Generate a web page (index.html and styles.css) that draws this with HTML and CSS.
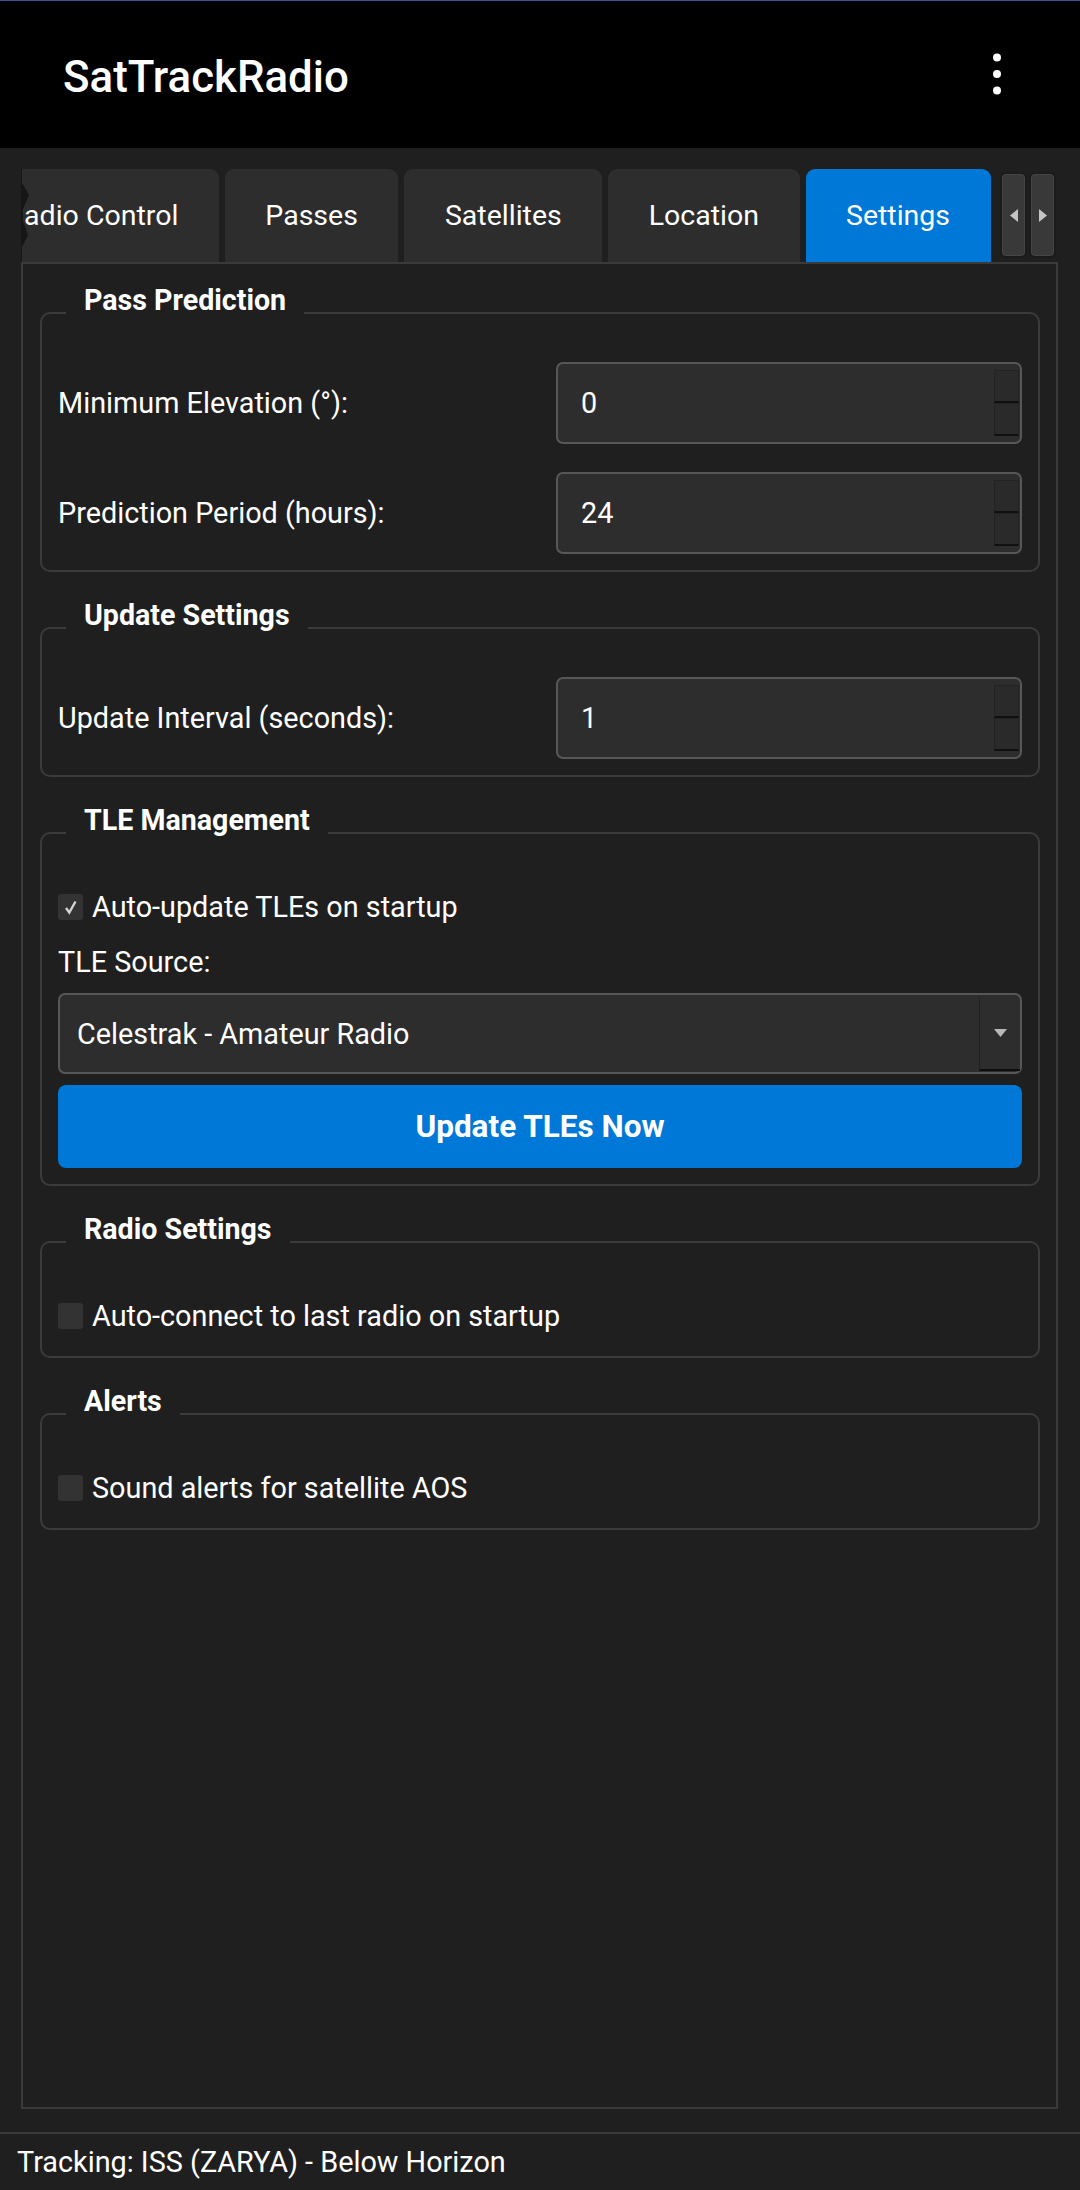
FILE: index.html
```html
<!DOCTYPE html>
<html lang="en">
<head>
<meta charset="utf-8">
<title>SatTrackRadio</title>
<link rel="stylesheet" href="styles.css">
</head>
<body>
<div class="app">
  <header class="appbar">
    <div class="title">SatTrackRadio</div>
    <svg class="kebab" width="10" height="42" viewBox="0 0 10 42" aria-hidden="true">
      <circle cx="5" cy="4.5" r="4"/>
      <circle cx="5" cy="21" r="4"/>
      <circle cx="5" cy="37.5" r="4"/>
    </svg>
  </header>

  <main class="main">
    <div class="tabbar">
      <div class="tabstrip">
        <div class="tabs">
          <div class="tab first">Radio Control</div>
          <div class="tab">Passes</div>
          <div class="tab">Satellites</div>
          <div class="tab">Location</div>
          <div class="tab active">Settings</div>
        </div>
        <svg class="tear" width="10" height="93" viewBox="0 0 10 93" aria-hidden="true">
          <polygon points="0,0 1,0 1,14 8,26 2,40 2,52 7,66 1,78 1,93 0,93"/>
        </svg>
      </div>
      <div class="scrollbtns">
        <div class="sbtn"><svg width="8" height="13" viewBox="0 0 8 13"><polygon points="8,0 8,13 0,6.5"/></svg></div>
        <div class="sbtn"><svg width="8" height="13" viewBox="0 0 8 13"><polygon points="0,0 0,13 8,6.5"/></svg></div>
      </div>
    </div>

    <div class="pane">
      <section class="group">
        <div class="gtitle">Pass Prediction</div>
        <div class="form">
          <div class="lbl">Minimum Elevation (°):</div>
          <div class="spin"><span class="val">0</span><span class="spinbtns"><i></i><i></i></span></div>
          <div class="lbl">Prediction Period (hours):</div>
          <div class="spin"><span class="val">24</span><span class="spinbtns"><i></i><i></i></span></div>
        </div>
      </section>

      <section class="group">
        <div class="gtitle">Update Settings</div>
        <div class="form">
          <div class="lbl">Update Interval (seconds):</div>
          <div class="spin"><span class="val">1</span><span class="spinbtns"><i></i><i></i></span></div>
        </div>
      </section>

      <section class="group">
        <div class="gtitle">TLE Management</div>
        <div class="stack">
          <div class="check">
            <span class="box checked"><svg width="14" height="16" viewBox="0 0 14 16"><polyline points="2,9 5.3,13.5 11.5,2.5"/></svg></span>
            <span>Auto-update TLEs on startup</span>
          </div>
          <div class="srclbl">TLE Source:</div>
          <div class="select">
            <span class="seltext">Celestrak - Amateur Radio</span>
            <span class="drop"><svg width="13" height="8" viewBox="0 0 13 8"><polygon points="0,0 13,0 6.5,8"/></svg></span>
          </div>
          <div class="btn">Update TLEs Now</div>
        </div>
      </section>

      <section class="group">
        <div class="gtitle">Radio Settings</div>
        <div class="check">
          <span class="box"></span>
          <span>Auto-connect to last radio on startup</span>
        </div>
      </section>

      <section class="group">
        <div class="gtitle">Alerts</div>
        <div class="check">
          <span class="box"></span>
          <span>Sound alerts for satellite AOS</span>
        </div>
      </section>
    </div>

    <div class="status">Tracking: ISS (ZARYA) - Below Horizon</div>
  </main>
</div>
</body>
</html>
```

FILE: styles.css
```css
* {
  box-sizing: border-box;
  margin: 0;
  padding: 0;
}

html, body {
  width: 1080px;
  height: 2190px;
}

body {
  background: #1f1f1f;
  color: #ffffff;
  font-family: Roboto, "Noto Sans", "Liberation Sans", sans-serif;
  font-size: 28.8px;
  overflow: hidden;
}

.app {
  display: flex;
  flex-direction: column;
  height: 2190px;
}

/* ---------- app bar ---------- */
.appbar {
  height: 148px;
  flex: none;
  background: #000000;
  border-top: 1px solid #3a5596;
  display: flex;
  align-items: center;
  justify-content: space-between;
  padding: 4px 78px 0 63px;
}

.title {
  font-size: 43.8px;
  font-weight: 500;
}

.kebab {
  fill: #ffffff;
  margin-top: -6px;
}

/* ---------- main ---------- */
.main {
  flex: 1;
  display: flex;
  flex-direction: column;
  padding: 21px 22px 0 21px;
}

.tabbar {
  height: 93px;
  flex: none;
  display: flex;
}

.tabstrip {
  flex: 1;
  overflow: hidden;
  position: relative;
}

.tabs {
  display: flex;
  gap: 6px;
  height: 100%;
  margin-left: -55px;
}

.tab {
  flex: none;
  display: flex;
  align-items: center;
  padding: 1px 40.5px 0;
  background: #2d2d2d;
  border-radius: 9px 9px 0 0;
  white-space: nowrap;
  font-size: 28.5px;
  line-height: 1;
}

.tab.active {
  background: #0078d7;
}

.tear {
  position: absolute;
  left: 0;
  top: 0;
  fill: #161616;
}

.scrollbtns {
  flex: none;
  display: flex;
  gap: 2px;
  padding: 3px 2px 4px 8px;
}

.sbtn {
  width: 27px;
  display: flex;
  align-items: center;
  justify-content: center;
  background: #393939;
  border: 2px solid #1b1b1b;
  box-shadow: inset 0 0 0 1px #454545;
  border-radius: 6px;
}

.sbtn svg {
  fill: #c4c4c4;
}

/* ---------- pane ---------- */
.pane {
  height: 1847px;
  flex: none;
  border: 2px solid #3a3a3a;
  padding: 48px 16px 0 17px;
}

.group {
  position: relative;
  border: 2px solid #3b3b3b;
  border-radius: 10px;
  padding: 48px 16px 16px 16px;
  margin-bottom: 55px;
}

.gtitle {
  position: absolute;
  left: 24px;
  top: -30px;
  padding: 0 18px;
  background: #1f1f1f;
  font-weight: 700;
  font-size: 28.6px;
  line-height: 32px;
}

.form {
  display: grid;
  grid-template-columns: 1fr 466px;
  row-gap: 28px;
  align-items: center;
}

.spin {
  height: 82px;
  display: flex;
  align-items: stretch;
  background: #2d2d2d;
  border: 2px solid #575757;
  border-radius: 7px;
}

.val {
  flex: 1;
  display: flex;
  align-items: center;
  padding-left: 23px;
}

.spinbtns {
  width: 25px;
  display: flex;
  flex-direction: column;
  margin: 6px 1px 6px 0;
}

.spinbtns i {
  flex: 1;
  background: #2a2a2a;
  border: 1px solid #232323;
  border-bottom: 2px solid #101010;
}

.stack {
  display: flex;
  flex-direction: column;
  gap: 11px;
}

.check {
  height: 49px;
  display: flex;
  align-items: center;
  gap: 9px;
}

.box {
  width: 25px;
  height: 26px;
  flex: none;
  background: #333333;
  border-radius: 3px;
  display: flex;
  align-items: center;
  justify-content: center;
}

.box svg {
  fill: none;
  stroke: #d4d4d4;
  stroke-width: 2.4;
}

.srclbl {
  height: 40px;
  display: flex;
  align-items: center;
}

.select {
  height: 81px;
  display: flex;
  align-items: stretch;
  background: #2d2d2d;
  border: 2px solid #575757;
  border-radius: 7px;
}

.seltext {
  flex: 1;
  display: flex;
  align-items: center;
  padding-left: 17px;
}

.drop {
  width: 41px;
  margin: 2px 0 1px 0;
  display: flex;
  align-items: center;
  justify-content: center;
  border-left: 1px solid #202020;
  border-bottom: 2px solid #0e0e0e;
}

.drop svg {
  fill: #b8b8b8;
}

.btn {
  height: 83px;
  display: flex;
  align-items: center;
  justify-content: center;
  background: #0078d7;
  border-radius: 8px;
  font-weight: 700;
  font-size: 31.5px;
}

/* ---------- status ---------- */
.status {
  margin: 23px -22px 0 -21px;
  height: 58px;
  border-top: 2px solid #3a3a3a;
  padding-left: 17px;
  display: flex;
  align-items: center;
}
```
